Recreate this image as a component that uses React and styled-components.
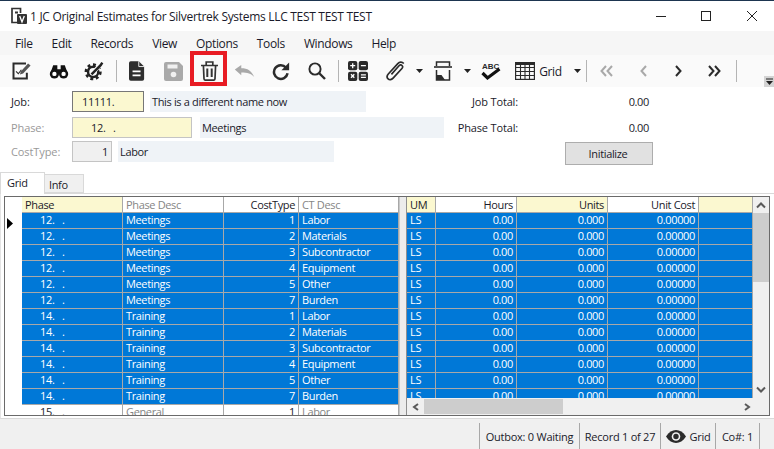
import React from 'react';
import styled, { createGlobalStyle } from 'styled-components';

const GlobalStyle = createGlobalStyle`
  html, body {
    margin: 0;
    padding: 0;
    background: #fff;
  }
  * {
    box-sizing: border-box;
  }
`;

const Window = styled.div`
  width: 774px;
  height: 449px;
  overflow: hidden;
  display: flex;
  flex-direction: column;
  background: #fff;
  color: #1a1a2a;
  font-family: "Open Sans", "Noto Sans", sans-serif;
  font-size: 11px;
  letter-spacing: -0.35px;
`;

const TitleBar = styled.div`
  height: 31px;
  flex: none;
  display: flex;
  align-items: center;
  padding: 1px 0 0 10px;
  background: linear-gradient(to bottom, #1d3550 1px, #fff 1px);
`;

const AppIcon = styled.svg`
  width: 17px;
  height: 18px;
  margin-right: 3px;
`;

const Title = styled.span`
  font-size: 12px;
  letter-spacing: -0.3px;
  flex: 1;
  white-space: nowrap;
`;

const WinButton = styled.svg`
  width: 46px;
  height: 12px;
  flex: none;
`;

const MenuBar = styled.div`
  height: 24px;
  flex: none;
  display: flex;
  align-items: center;
  gap: 19px;
  padding-left: 15px;
  background: #f6f6f6;
  font-size: 12px;
`;

const Toolbar = styled.div`
  position: relative;
  height: 32px;
  flex: none;
  display: flex;
  align-items: center;
  padding-left: 3px;
  background: #fafafa;
`;

const Tool = styled.div`
  width: ${p => p.$w}px;
  height: 32px;
  margin-left: ${p => p.$ml || 0}px;
  flex: none;
  display: flex;
  align-items: center;
  justify-content: center;
  font-size: 12px;
`;

const Separator = styled.div`
  width: 1px;
  height: 22px;
  background: #b4b4b4;
`;

const RedBox = styled.div`
  position: absolute;
  left: 190px;
  top: -4px;
  width: 37px;
  height: 35px;
  border: 4px solid #e81c24;
`;

const Overflow = styled.div`
  position: absolute;
  right: 0;
  bottom: 0;
  width: 10px;
  height: 11px;
  background: #d4d4d4;
  display: flex;
  align-items: center;
  justify-content: center;
`;

const Form = styled.div`
  height: 85px;
  flex: none;
  display: flex;
  padding-top: 4px;
`;

const FormLeft = styled.div`
  width: 444px;
  flex: none;
`;

const FormRow = styled.div`
  height: 21px;
  margin-bottom: ${p => p.$mb || 0}px;
  display: flex;
  align-items: center;
`;

const FieldLabel = styled.div`
  width: 72px;
  padding-left: 11px;
  flex: none;
  letter-spacing: -0.1px;
  color: ${p => (p.$dim ? '#999' : '#1a1a2a')};
`;

const Field = styled.div`
  width: ${p => p.$w}px;
  height: 100%;
  flex: none;
  display: flex;
  align-items: center;
  justify-content: ${p => (p.$end ? 'flex-end' : 'flex-start')};
  padding: ${p => p.$pad || '0 3px'};
  background: ${p => p.$bg};
  border: ${p => (p.$strong ? '1px solid #777' : '1px solid #c4c4c4')};
  white-space: pre;
`;

const Description = styled.div`
  width: ${p => p.$w}px;
  height: 100%;
  flex: none;
  margin-left: ${p => p.$ml}px;
  padding-left: 2px;
  display: flex;
  align-items: center;
  background: #eff3f7;
`;

const FormRight = styled.div`
  flex: 1;
`;

const TotalLabel = styled.div`
  width: 74px;
  text-align: right;
  white-space: nowrap;
  letter-spacing: -0.15px;
`;

const TotalValue = styled.div`
  width: 131px;
  text-align: right;
`;

const ActionButton = styled.div`
  width: 88px;
  height: 23px;
  margin: 4px 0 0 121px;
  padding-right: 2px;
  display: flex;
  align-items: center;
  justify-content: center;
  background: #e1e1e1;
  border: 1px solid #adadad;
`;

const TabStrip = styled.div`
  height: 21px;
  flex: none;
  display: flex;
  align-items: flex-end;
  position: relative;
  z-index: 1;
`;

const Tab = styled.div`
  width: ${p => p.$w}px;
  height: ${p => (p.$active ? 22 : 19)}px;
  margin-bottom: ${p => (p.$active ? -1 : 0)}px;
  padding: ${p => (p.$active ? '0 0 2px 6px' : '2px 0 0 4px')};
  display: flex;
  align-items: center;
  background: ${p => (p.$active ? '#fff' : '#f0f0f0')};
  border: 1px solid #d9d9d9;
  border-bottom: ${p => (p.$active ? 'none' : '1px solid #d9d9d9')};
  border-left: ${p => (p.$active ? '1px solid #d9d9d9' : 'none')};
`;

const TabPanel = styled.div`
  height: 226px;
  flex: none;
  padding: 2px 0 0 3px;
  border-top: 1px solid #d9d9d9;
  border-bottom: 1px solid #d9d9d9;
  border-left: 1px solid #e4e4e4;
`;

const GridFrame = styled.div`
  width: 766px;
  height: 220px;
  display: flex;
  overflow: hidden;
  border: 1px solid #6a6a6a;
`;

const Indicator = styled.div`
  width: 17px;
  height: 218px;
  flex: none;
  padding: 20px 0 0 2px;
`;

const Pane = styled.div`
  width: ${p => p.$w}px;
  height: ${p => p.$h}px;
  flex: none;
  overflow: hidden;
`;

const Row = styled.div`
  height: 16px;
  display: grid;
  grid-template-columns: ${p => p.$cols};
  line-height: 13px;
  background: ${p => (p.$selected ? '#0078d7' : '#fff')};
  color: ${p => (p.$selected ? '#fff' : '#1a1a2a')};
  border-bottom: 1px solid #a8a8a8;
`;

const HeaderRow = styled(Row)`
  line-height: 15px;
  background: #fff;
  color: #1a1a2a;
`;

const Cell = styled.div`
  padding: 0 3px 0 ${p => p.$indent || 3}px;
  text-align: ${p => (p.$right ? 'right' : 'left')};
  border-right: 1px solid #a8a8a8;
  white-space: pre;
  overflow: hidden;
  color: ${p => (p.$muted ? '#858585' : 'inherit')};
  background: ${p => (p.$key ? '#fbf8d0' : 'transparent')};
`;

const Splitter = styled.div`
  width: 8px;
  height: 218px;
  flex: none;
  background: #ececec;
  border-left: 1px solid #c8c8c8;
  border-right: 1px solid #8f8f8f;
`;

const RightSide = styled.div`
  flex: 1;
  display: flex;
  flex-direction: column;
`;

const RightTop = styled.div`
  display: flex;
  height: 201px;
`;

const VScroll = styled.div`
  width: 16px;
  height: 201px;
  flex: none;
  display: flex;
  flex-direction: column;
  background: #f0f0f0;
`;

const ScrollCap = styled.div`
  height: ${p => p.$h}px;
  flex: none;
  display: flex;
  align-items: center;
  justify-content: center;
`;

const VThumb = styled.div`
  height: 69px;
  flex: none;
  background: #cdcdcd;
`;

const VTrack = styled.div`
  flex: 1;
`;

const HScroll = styled.div`
  height: 17px;
  display: flex;
  align-items: center;
  background: #f0f0f0;
`;

const HThumb = styled.div`
  width: 139px;
  height: 15px;
  flex: none;
  background: #cdcdcd;
`;

const HTrack = styled.div`
  width: 175px;
  flex: none;
`;

const HArrow = styled.div`
  width: 17px;
  flex: none;
  display: flex;
  justify-content: center;
`;

const StatusBar = styled.div`
  flex: 1;
  display: flex;
  align-items: flex-end;
  justify-content: flex-end;
  background: #f0f0f0;
  letter-spacing: -0.25px;
`;

const StatusCell = styled.div`
  width: ${p => p.$w}px;
  height: 26px;
  flex: none;
  display: flex;
  align-items: center;
  justify-content: center;
  gap: 4px;
  border-left: 1px solid #a8a8a8;
  white-space: nowrap;
`;

const ICON = '#2b2b2b';

const Svg = ({ w = 24, h = 24, box = '0 0 24 24', children }) => (
  <svg width={w} height={h} viewBox={box} fill="none">{children}</svg>
);

const EditIcon = () => (
  <Svg w={20} h={20}>
    <path d="M18 3H3v18h16v-7" stroke={ICON} strokeWidth="2.4" />
    <path d="M6 12.5l2.8 2.8 3.7-4.8" stroke={ICON} strokeWidth="1.3" />
    <path d="M20.5 3l3 2.5-9 9.5-3.8 1.2 1-3.6z" fill="#555" />
  </Svg>
);

const BinocularsIcon = () => (
  <Svg w={20} h={20}>
    <path d="M5 5h5v5h4V5h5l1 3 3 8H1l3-8z" fill="#111" />
    <circle cx="6.5" cy="15.5" r="5.5" fill="#111" />
    <circle cx="17.5" cy="15.5" r="5.5" fill="#111" />
    <circle cx="6.5" cy="15.5" r="2.6" fill="#fff" />
    <circle cx="17.5" cy="15.5" r="2.6" fill="#fff" />
  </Svg>
);

const GearIcon = () => (
  <Svg w={20} h={20}>
    <circle cx="11" cy="13" r="8.5" stroke="#222" strokeWidth="3.5" strokeDasharray="3.4 3.2" />
    <circle cx="11" cy="13" r="6.2" stroke="#222" strokeWidth="3" />
    <path d="M9 16L20 4" stroke="#fafafa" strokeWidth="5" />
    <path d="M9 16L20 5l2-3" stroke="#222" strokeWidth="3" />
  </Svg>
);

const DocIcon = () => (
  <Svg w={16} h={20} box="0 0 18 22">
    <path d="M2 0h9l6 6v14a2 2 0 0 1-2 2H2a2 2 0 0 1-2-2V2a2 2 0 0 1 2-2z" fill="#2e2e2e" />
    <path d="M11 0v6h6" stroke="#fafafa" strokeWidth="1" />
    <path d="M4 11.5h9M4 16h9" stroke="#fff" strokeWidth="2" />
  </Svg>
);

const SaveIcon = () => (
  <Svg w={19} h={19} box="0 0 19 19">
    <path d="M2 0h13l4 4v13a2 2 0 0 1-2 2H2a2 2 0 0 1-2-2V2a2 2 0 0 1 2-2z" fill="#a9a9a9" />
    <rect x="3.5" y="2.5" width="10" height="4" fill="#f0f0f0" />
    <circle cx="9.5" cy="12.5" r="2.8" fill="#f0f0f0" />
  </Svg>
);

const TrashIcon = () => (
  <Svg w={17} h={20} box="0 0 17 20">
    <path d="M0 4.5h17M5.2 4V1h6.6V4" stroke="#333" strokeWidth="1.7" />
    <path d="M2.4 4.5l.6 13.2a1.6 1.6 0 0 0 1.6 1.5h7.800a1.6 1.6 0 0 0 1.6-1.5l.6-13.2" stroke="#333" strokeWidth="1.7" />
    <path d="M6.3 7.5v8.5M10.7 7.5v8.5" stroke="#333" strokeWidth="2" />
  </Svg>
);

const UndoIcon = () => (
  <Svg w={21} h={12} box="0 0 21 13">
    <path d="M0 5l7-5v3.5c7 0 11 2.5 14 9.5-3.5-4-7-5-14-5V11z" fill="#a9a9a9" />
  </Svg>
);

const RedoIcon = () => (
  <Svg w={18} h={19} box="0 0 20 20">
    <path d="M15.5 5.6A7.6 7.6 0 1 0 17.3 12" stroke="#2b2b2b" strokeWidth="2.8" />
    <path d="M19 0v8.5h-8.5z" fill="#2b2b2b" />
  </Svg>
);

const SearchIcon = () => (
  <Svg w={18} h={18} box="0 0 18 18">
    <circle cx="7" cy="7" r="5.6" stroke="#2b2b2b" strokeWidth="1.9" />
    <path d="M11 11l6 6" stroke="#2b2b2b" strokeWidth="2.4" />
  </Svg>
);

const CalcIcon = () => (
  <Svg w={20} h={20} box="0 0 20 20">
    <rect width="9.3" height="9.3" rx="2" fill="#2b2b2b" />
    <rect x="10.7" width="9.3" height="9.3" rx="2" fill="#2b2b2b" />
    <rect y="10.7" width="9.3" height="9.3" rx="2" fill="#2b2b2b" />
    <rect x="10.7" y="10.7" width="9.3" height="9.3" rx="2" fill="#2b2b2b" />
    <path d="M2.2 4.7h5M4.7 2.2v5M12.9 4.7h5M12.9 13.8h5M12.9 16.4h5M3 13.2l3.3 3.6M6.3 13.2L3 16.8" stroke="#fff" strokeWidth="1.3" />
  </Svg>
);

const ClipIcon = () => (
  <Svg w={20} h={20} box="0 0 20 20">
    <path d="M17.8 2.5c-1.9-2-4.3-1.7-6 .1L2.5 12.8c-1.7 1.9-1.7 3.9-.4 5.1 1.3 1.3 3.3 1.1 5-.7l8.600-9.4c1.1-1.2 1.1-2.5.3-3.3-.9-.9-2.1-.7-3.2.5L5.4 13.4" stroke="#2b2b2b" strokeWidth="1.7" />
  </Svg>
);

const PrintIcon = () => (
  <Svg w={18} h={20} box="0 0 18 20">
    <path d="M2.5 5V1h13v4" stroke="#2b2b2b" strokeWidth="1.5" />
    <path d="M0 6h18" stroke="#2b2b2b" strokeWidth="1.6" />
    <path d="M2.5 9v10h13V9" stroke="#2b2b2b" strokeWidth="1.5" />
    <path d="M3 14h4.5l3.5 5H3z" fill="#2b2b2b" />
  </Svg>
);

const SpellIcon = () => (
  <Svg w={20} h={20} box="0 0 20 20">
    <text x="1" y="7.5" fontSize="8" fontWeight="700" letterSpacing="0" fontFamily="Liberation Sans, sans-serif" fill="#2b2b2b">ABC</text>
    <path d="M1.5 12l5 5L18.5 8" stroke="#111" strokeWidth="3.2" />
  </Svg>
);

const GridIcon = () => (
  <Svg w={20} h={18} box="0 0 20 18">
    <rect x=".6" y=".6" width="18.8" height="16.8" stroke="#2b2b2b" strokeWidth="1.2" />
    <path d="M1 5.5h18M1 9.5h18M1 13.5h18M5.5 1v16M10 1v16M14.5 1v16" stroke="#2b2b2b" strokeWidth="1.1" />
    <path d="M1 1h18v2H1z" fill="#2b2b2b" />
  </Svg>
);

const Caret = () => (
  <Svg w={7} h={4} box="0 0 7 4">
    <path d="M0 0h7L3.5 4z" fill="#222" />
  </Svg>
);

const Chevrons = ({ d, color }) => (
  <Svg w={14} h={12} box="0 0 14 12">
    <path d={d} stroke={color} strokeWidth="2" />
  </Svg>
);

const EyeIcon = () => (
  <svg width="20" height="13" viewBox="0 0 20 13" fill="none">
    <path d="M0 6.5C3 2 6.2 0 10 0s7 2 10 6.5C17 11 13.8 13 10 13S3 11 0 6.5z" fill="#2b2b2b" />
    <circle cx="10" cy="6.5" r="4.3" fill="#f0f0f0" />
    <circle cx="10" cy="6.5" r="2.7" fill="#2b2b2b" />
  </svg>
);

const ScrollChevron = ({ d }) => (
  <svg width="10" height="8" viewBox="0 0 10 8" fill="none">
    <path d={d} stroke="#5a5a5a" strokeWidth="2" />
  </svg>
);

const menus = ['File', 'Edit', 'Records', 'View', 'Options', 'Tools', 'Windows', 'Help'];

const phaseRows = [
  ['12.   .', 'Meetings'],
  ['14.   .', 'Training'],
];
const costTypes = [
  ['1', 'Labor'],
  ['2', 'Materials'],
  ['3', 'Subcontractor'],
  ['4', 'Equipment'],
  ['5', 'Other'],
  ['7', 'Burden'],
];
const rows = phaseRows.flatMap(([phase, desc]) =>
  costTypes.map(([type, ct]) => ({ phase, desc, type, ct }))
);

const LEFT_COLS = '101px 101px 75px 100px';
const RIGHT_COLS = '29px 81px 91px 91px 54px';

const App = () => (
  <Window>
    <GlobalStyle />
    <TitleBar>
      <AppIcon viewBox="0 0 17 18" fill="none">
        <path d="M9 15.5H2V1.5h8.5V6" stroke="#333" strokeWidth="1.7" />
        <rect x="5" y="4.5" width="3" height="2" fill="#333" />
        <rect x="7" y="7" width="10" height="10" rx="1" fill="#333" />
        <path d="M9.7 9l2.3 6 2.3-6" stroke="#fff" strokeWidth="1.3" />
      </AppIcon>
      <Title>1 JC Original Estimates for Silvertrek Systems LLC TEST TEST TEST</Title>
      <WinButton viewBox="0 0 46 12" fill="none">
        <path d="M20 6.5h10" stroke="#222" />
      </WinButton>
      <WinButton viewBox="0 0 46 12" fill="none">
        <rect x="19.5" y="1.5" width="9" height="9" stroke="#222" />
      </WinButton>
      <WinButton viewBox="0 0 46 12" fill="none">
        <path d="M19 1l10 10M29 1L19 11" stroke="#222" />
      </WinButton>
    </TitleBar>
    <MenuBar>
      {menus.map(m => <span key={m}>{m}</span>)}
    </MenuBar>
    <Toolbar>
      <Tool $w={36}><EditIcon /></Tool>
      <Tool $w={40}><BinocularsIcon /></Tool>
      <Tool $w={30}><GearIcon /></Tool>
      <Tool $w={14}><Separator /></Tool>
      <Tool $w={28}><DocIcon /></Tool>
      <Tool $w={44}><SaveIcon /></Tool>
      <Tool $w={28}><TrashIcon /></Tool>
      <Tool $w={42}><UndoIcon /></Tool>
      <Tool $w={32}><RedoIcon /></Tool>
      <Tool $w={40}><SearchIcon /></Tool>
      <Tool $w={2}><Separator /></Tool>
      <Tool $w={38}><CalcIcon /></Tool>
      <Tool $w={38}><ClipIcon /></Tool>
      <Tool $w={8}><Caret /></Tool>
      <Tool $w={40}><PrintIcon /></Tool>
      <Tool $w={8}><Caret /></Tool>
      <Tool $w={40}><SpellIcon /></Tool>
      <Tool $w={28}><GridIcon /></Tool>
      <Tool $w={23}>Grid</Tool>
      <Tool $w={12} $ml={9}><Caret /></Tool>
      <Tool $w={6}><Separator /></Tool>
      <Tool $w={36}><Chevrons d="M6 1L1.5 6 6 11M12 1L7.5 6 12 11" color="#a9a9a9" /></Tool>
      <Tool $w={38}><Chevrons d="M9 1L4.5 6 9 11" color="#a9a9a9" /></Tool>
      <Tool $w={30}><Chevrons d="M5 1l4.5 5L5 11" color="#2b2b2b" /></Tool>
      <Tool $w={42}><Chevrons d="M2 1l4.5 5L2 11M8 1l4.5 5L8 11" color="#2b2b2b" /></Tool>
      <Tool $w={2}><Separator /></Tool>
      <RedBox />
      <Overflow>
        <svg width="7" height="7" viewBox="0 0 7 7" fill="none">
          <path d="M0 1h7" stroke="#222" />
          <path d="M0 3h7L3.5 7z" fill="#222" />
        </svg>
      </Overflow>
    </Toolbar>
    <Form>
      <FormLeft>
        <FormRow $mb={5}>
          <FieldLabel>Job:</FieldLabel>
          <Field $w={72} $bg="#fbf8d0" $strong $pad="0 0 0 9px">11111.</Field>
          <Description $ml={6} $w={216}>This is a different name now</Description>
        </FormRow>
        <FormRow $mb={3}>
          <FieldLabel $dim>Phase:</FieldLabel>
          <Field $w={120} $bg="#fbf8d0" $pad="0 0 0 18px">12.   .</Field>
          <Description $ml={8} $w={244}>Meetings</Description>
        </FormRow>
        <FormRow>
          <FieldLabel $dim>CostType:</FieldLabel>
          <Field $w={40} $bg="#f0f0f0" $end>1</Field>
          <Description $ml={6} $w={216}>Labor</Description>
        </FormRow>
      </FormLeft>
      <FormRight>
        <FormRow $mb={5}>
          <TotalLabel>Job Total:</TotalLabel>
          <TotalValue>0.00</TotalValue>
        </FormRow>
        <FormRow>
          <TotalLabel>Phase Total:</TotalLabel>
          <TotalValue>0.00</TotalValue>
        </FormRow>
        <ActionButton>Initialize</ActionButton>
      </FormRight>
    </Form>
    <TabStrip>
      <Tab $w={45} $active>Grid</Tab>
      <Tab $w={39}>Info</Tab>
    </TabStrip>
    <TabPanel>
      <GridFrame>
        <Indicator>
          <svg width="6" height="11" viewBox="0 0 6 11">
            <path d="M0 0l6 5.5L0 11z" fill="#000" />
          </svg>
        </Indicator>
        <Pane $w={377} $h={218}>
          <HeaderRow $cols={LEFT_COLS}>
            <Cell $key>Phase</Cell>
            <Cell $muted>Phase Desc</Cell>
            <Cell $right>CostType</Cell>
            <Cell $muted>CT Desc</Cell>
          </HeaderRow>
          {rows.map((r, i) => (
            <Row key={i} $cols={LEFT_COLS} $selected>
              <Cell $indent={18}>{r.phase}</Cell>
              <Cell>{r.desc}</Cell>
              <Cell $right>{r.type}</Cell>
              <Cell>{r.ct}</Cell>
            </Row>
          ))}
          <Row $cols={LEFT_COLS}>
            <Cell $indent={18}>15.   .</Cell>
            <Cell $muted>General</Cell>
            <Cell $right>1</Cell>
            <Cell $muted>Labor</Cell>
          </Row>
        </Pane>
        <Splitter />
        <RightSide>
          <RightTop>
            <Pane $w={346} $h={201}>
              <HeaderRow $cols={RIGHT_COLS}>
                <Cell $key>UM</Cell>
                <Cell $right>Hours</Cell>
                <Cell $right $key>Units</Cell>
                <Cell $right>Unit Cost</Cell>
                <Cell $key />
              </HeaderRow>
              {rows.map((r, i) => (
                <Row key={i} $cols={RIGHT_COLS} $selected>
                  <Cell>LS</Cell>
                  <Cell $right>0.00</Cell>
                  <Cell $right>0.000</Cell>
                  <Cell $right>0.00000</Cell>
                  <Cell />
                </Row>
              ))}
            </Pane>
            <VScroll>
              <ScrollCap $h={16}><ScrollChevron d="M1 6.5L5 2.5l4 4" /></ScrollCap>
              <VThumb />
              <VTrack />
              <ScrollCap $h={16}><ScrollChevron d="M1 1.5l4 4 4-4" /></ScrollCap>
            </VScroll>
          </RightTop>
          <HScroll>
            <HArrow><ScrollChevron d="M7 1L3 4l4 3" /></HArrow>
            <HThumb />
            <HTrack />
            <HArrow><ScrollChevron d="M3 1l4 3-4 3" /></HArrow>
          </HScroll>
        </RightSide>
      </GridFrame>
    </TabPanel>
    <StatusBar>
      <StatusCell $w={100}>Outbox: 0 Waiting</StatusCell>
      <StatusCell $w={81}>Record 1 of 27</StatusCell>
      <StatusCell $w={55}><EyeIcon />Grid</StatusCell>
      <StatusCell $w={44}>Co#: 1</StatusCell>
      <StatusCell $w={15} />
    </StatusBar>
  </Window>
);

export default App;
